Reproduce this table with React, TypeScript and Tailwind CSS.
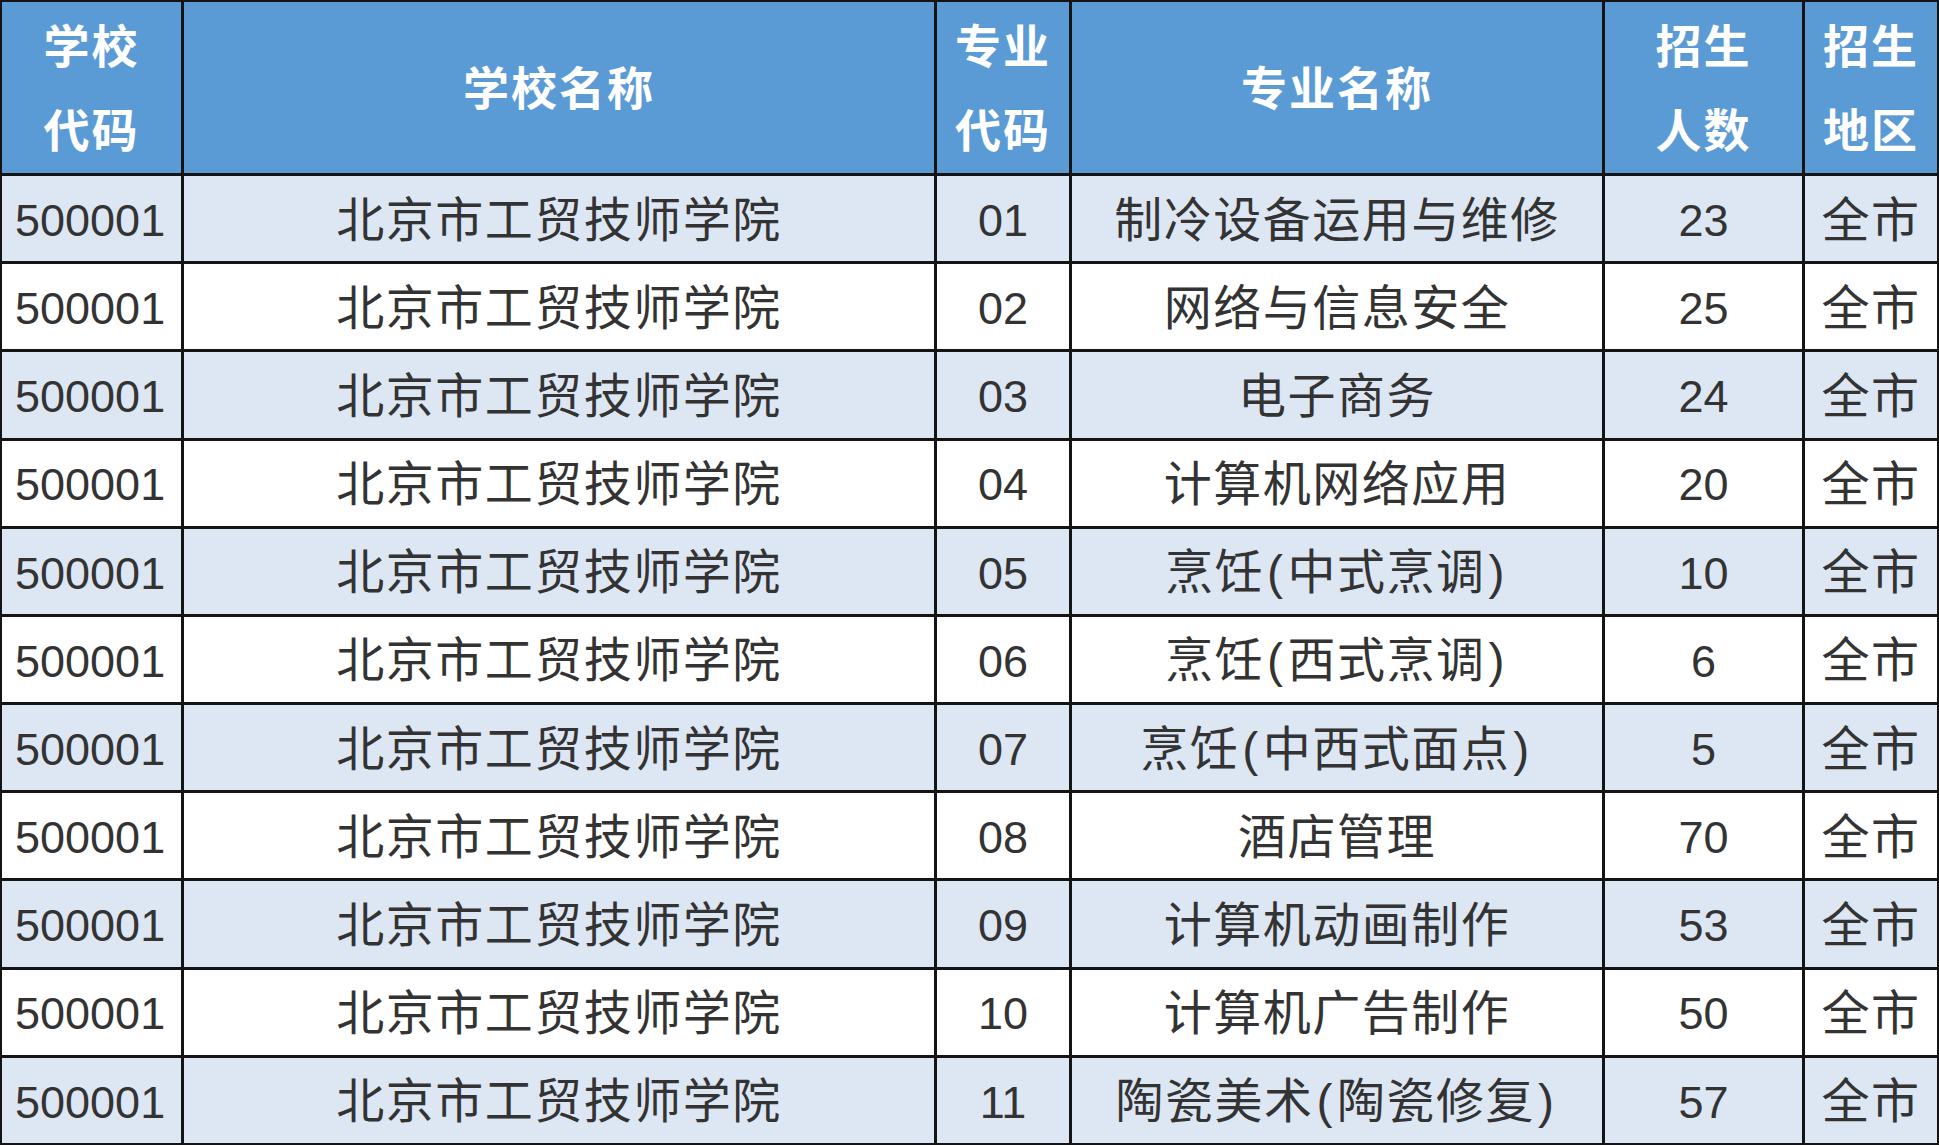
import React from "react";

const rows: [string, string, string, string][] = [
  ["01", "制冷设备运用与维修", "23", "全市"],
  ["02", "网络与信息安全", "25", "全市"],
  ["03", "电子商务", "24", "全市"],
  ["04", "计算机网络应用", "20", "全市"],
  ["05", "烹饪(中式烹调)", "10", "全市"],
  ["06", "烹饪(西式烹调)", "6", "全市"],
  ["07", "烹饪(中西式面点)", "5", "全市"],
  ["08", "酒店管理", "70", "全市"],
  ["09", "计算机动画制作", "53", "全市"],
  ["10", "计算机广告制作", "50", "全市"],
  ["11", "陶瓷美术(陶瓷修复)", "57", "全市"],
];

const cjk = { fontFamily: '"Liberation Sans", "Noto Sans CJK SC", sans-serif' };

function Name({ text }: { text: string }) {
  const parts = text.split(/([()])/);
  return (
    <>
      {parts.map((p, i) =>
        p === "(" || p === ")" ? (
          <span key={i} className="font-light mx-[3px]">
            {p}
          </span>
        ) : (
          <span key={i}>{p}</span>
        )
      )}
    </>
  );
}

export default function App() {
  return (
    <div
      className="w-[1939px] h-[1145px] bg-[#141414] p-[2px] grid gap-[3px] grid-cols-[179px_750px_132px_530px_197px_132px] grid-rows-[171px_repeat(11,minmax(0,1fr))] text-[#333333]"
      style={cjk}
    >
      {["学校\n代码", "学校名称", "专业\n代码", "专业名称", "招生\n人数", "招生\n地区"].map((h, i) => (
        <div
          key={i}
          className="bg-[#5b9bd5] text-white font-bold text-[46px] leading-[84px] tracking-[2px] flex items-center justify-center text-center whitespace-pre-line pt-[2px]"
        >
          {h}
        </div>
      ))}
      {rows.map((r, idx) => {
        const bg = idx % 2 === 0 ? "bg-[#dde7f3]" : "bg-white";
        return (
          <React.Fragment key={idx}>
            <div className={`${bg} flex items-center pl-[13px] pt-[4px] text-[45px]`}>500001</div>
            <div className={`${bg} flex items-center justify-center pt-[4px] text-[48px] tracking-[1.5px]`}>北京市工贸技师学院</div>
            <div className={`${bg} flex items-center justify-center pt-[4px] text-[45px]`}>{r[0]}</div>
            <div className={`${bg} flex items-center justify-center pt-[4px] text-[48px] tracking-[1.5px]`}>
              <Name text={r[1]} />
            </div>
            <div className={`${bg} flex items-center justify-center pt-[4px] text-[45px]`}>{r[2]}</div>
            <div className={`${bg} flex items-center justify-center pt-[4px] text-[48px] tracking-[1.5px]`}>{r[3]}</div>
          </React.Fragment>
        );
      })}
    </div>
  );
}
